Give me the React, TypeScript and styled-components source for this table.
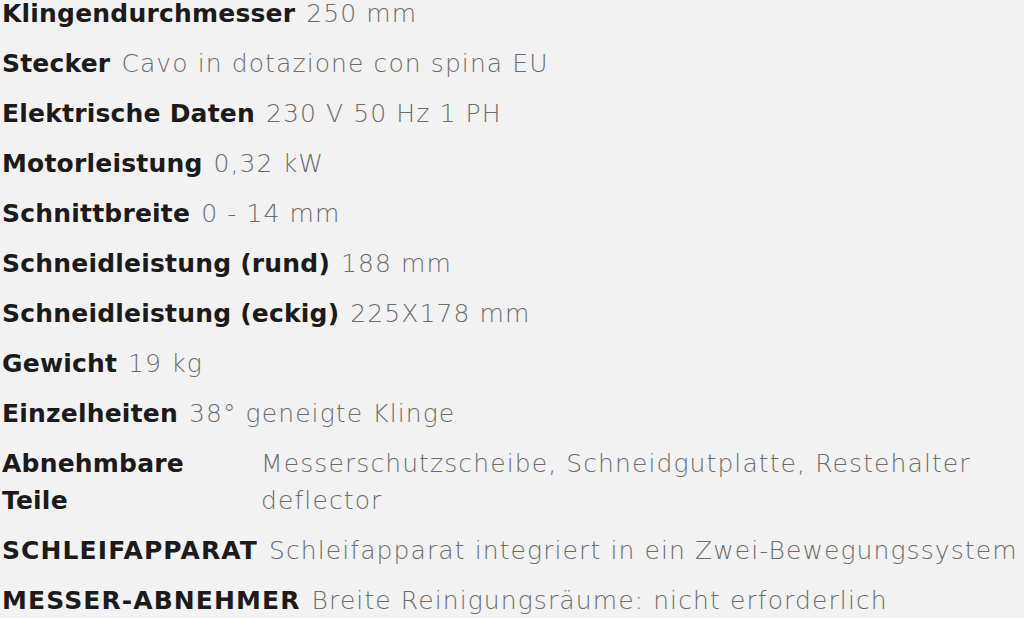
import styled, { createGlobalStyle } from 'styled-components';

const GlobalStyle = createGlobalStyle`
    html, body {
        margin: 0;
        padding: 0;
        background: #f2f2f2;
        overflow: hidden;
    }
`;

const SpecList = styled.dl`
    margin: -5px 0 0 0;
    padding: 0 0 0 2px;
    width: 1100px;
    font-family: 'DejaVu Sans', 'Noto Sans', sans-serif;
    font-size: 25px;
    line-height: 37px;
`;

const Row = styled.div`
    display: flex;
    align-items: flex-start;
    gap: 11px;
    padding-bottom: 13px;
`;

const Label = styled.dt<{ $width?: number; $caps?: boolean }>`
    margin: 0;
    flex: 0 0 ${(p) => (p.$width ? `${p.$width}px` : 'auto')};
    font-weight: 700;
    letter-spacing: ${(p) => (p.$caps ? '1.1px' : '0.2px')};
    color: #1b1b1b;
    white-space: ${(p) => (p.$width ? 'normal' : 'nowrap')};
`;

const Value = styled.dd<{ $width?: number }>`
    margin: 0;
    font-weight: 300;
    letter-spacing: 1.1px;
    color: #6c6c6c;
    white-space: ${(p) => (p.$width ? 'normal' : 'nowrap')};
    width: ${(p) => (p.$width ? `${p.$width}px` : 'auto')};
`;

interface Spec {
    label: string;
    value: string;
    labelWidth?: number;
    valueWidth?: number;
}

const specs: Spec[] = [
    { label: 'Klingendurchmesser', value: '250 mm' },
    { label: 'Stecker', value: 'Cavo in dotazione con spina EU' },
    { label: 'Elektrische Daten', value: '230 V 50 Hz 1 PH' },
    { label: 'Motorleistung', value: '0,32 kW' },
    { label: 'Schnittbreite', value: '0 - 14 mm' },
    { label: 'Schneidleistung (rund)', value: '188 mm' },
    { label: 'Schneidleistung (eckig)', value: '225X178 mm' },
    { label: 'Gewicht', value: '19 kg' },
    { label: 'Einzelheiten', value: '38° geneigte Klinge' },
    {
        label: 'Abnehmbare Teile',
        value: 'Messerschutzscheibe, Schneidgutplatte, Restehalter deflector',
        labelWidth: 248,
        valueWidth: 760,
    },
    { label: 'SCHLEIFAPPARAT', value: 'Schleifapparat integriert in ein Zwei-Bewegungssystem' },
    { label: 'MESSER-ABNEHMER', value: 'Breite Reinigungsräume: nicht erforderlich' },
];

const App = () => (
    <>
        <GlobalStyle />
        <SpecList>
            {specs.map((spec) => (
                <Row key={spec.label}>
                    <Label $width={spec.labelWidth} $caps={spec.label === spec.label.toUpperCase()}>
                        {spec.label}
                    </Label>
                    <Value $width={spec.valueWidth}>{spec.value}</Value>
                </Row>
            ))}
        </SpecList>
    </>
);

export default App;
